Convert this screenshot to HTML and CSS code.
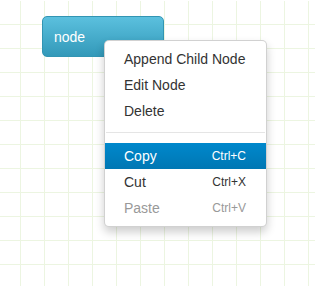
FILE: index.html
```html
<!DOCTYPE html>
<html lang="en">
  <head>
    <meta charset="UTF-8" />
    <meta name="viewport" content="width=device-width, initial-scale=1.0" />
    <title>Mind map</title>
    <link rel="stylesheet" href="styles.css">
  </head>
  <body>
    <div class="canvas">
      <div class="node">node</div>

      <ul class="context-menu">
        <li class="item">Append Child Node</li>
        <li class="item">Edit Node</li>
        <li class="item">Delete</li>
        <li class="divider"></li>
        <li class="item active">Copy <span class="shortcut">Ctrl+C</span></li>
        <li class="item">Cut <span class="shortcut">Ctrl+X</span></li>
        <li class="item disabled">Paste <span class="shortcut">Ctrl+V</span></li>
      </ul>
    </div>
  </body>
</html>
```

FILE: styles.css
```css
* {
  margin: 0;
  padding: 0;
  box-sizing: border-box;
}

html,
body {
  background: #fff;
}

body {
  font-family: "Liberation Sans", Arial, sans-serif;
  font-size: 14px;
  color: #333;
}

.canvas {
  position: relative;
  width: 100vw;
  height: 100vh;
  padding-top: 1px;
  background-color: #fff;
  background-image: linear-gradient(to right, #ecf5e1 1px, transparent 1px),
    linear-gradient(to bottom, #ecf5e1 1px, transparent 1px);
  background-size: 24px 24px;
  background-position: 20px 0, 0 0;
  background-clip: content-box;
  overflow: hidden;
}

.node {
  position: absolute;
  left: 42px;
  top: 16px;
  width: 122px;
  height: 41px;
  padding: 1px 11px 0;
  line-height: 39px;
  color: #fff;
  background: linear-gradient(#5bc0de, #3399b9);
  border: 1px solid #3295b3;
  border-radius: 5px;
}

.context-menu {
  position: absolute;
  left: 104px;
  top: 40px;
  width: 163px;
  padding: 5px 0;
  list-style: none;
  background: #fff;
  border: 1px solid rgba(0, 0, 0, 0.18);
  border-radius: 5px;
  box-shadow: 0 5px 10px rgba(0, 0, 0, 0.2);
}

.item {
  display: flex;
  justify-content: space-between;
  align-items: center;
  height: 26px;
  padding: 0 20px 0 19px;
  color: #333;
}

.shortcut {
  font-size: 12px;
}

.item.active {
  color: #fff;
  background: linear-gradient(#0088cc, #0077b3);
}

.item.disabled {
  color: #999;
}

.divider {
  height: 1px;
  margin: 8px 1px 10px;
  background: #e5e5e5;
}
```
